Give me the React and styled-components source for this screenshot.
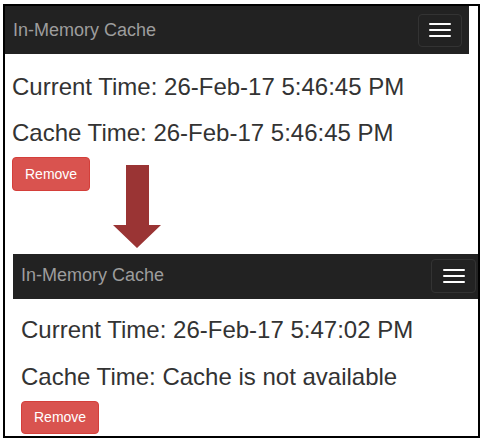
import React from "react";
import styled, { createGlobalStyle } from "styled-components";

const Global = createGlobalStyle`
  html, body { margin: 0; padding: 0; background: #fff; }
  body { font-family: "Liberation Sans", Arial, sans-serif; color: #333; }
`;

const Frame = styled.div`
  position: relative;
  box-sizing: border-box;
  margin: 4px 0 0 3px;
  width: 477px;
  height: 434px;
  border: 2px solid #000;
  overflow: hidden;
  background: #fff;
`;

const Shot = styled.section`
  width: ${(p) => p.$width}px;
  margin: ${(p) => p.$top}px 0 0 ${(p) => p.$left}px;
`;

const Navbar = styled.header`
  box-sizing: border-box;
  height: ${(p) => p.$height}px;
  background: #222;
  display: flex;
  align-items: center;
  justify-content: space-between;
  padding: ${(p) => (p.$compact ? "0 7px 3px 8px" : "0 7px 0 8px")};
`;

const Brand = styled.span`
  font-size: 18px;
  line-height: 20px;
  color: #9d9d9d;
`;

const Toggle = styled.button`
  box-sizing: border-box;
  width: ${(p) => (p.$compact ? 45 : 44)}px;
  height: ${(p) => (p.$compact ? 34 : 33)}px;
  margin-top: ${(p) => (p.$compact ? 3 : 0)}px;
  border: 1px solid #333;
  border-radius: 4px;
  background: transparent;
  display: flex;
  flex-direction: column;
  align-items: center;
  justify-content: center;
  gap: 4px;
  padding: 0;
`;

const Bar = styled.span`
  display: block;
  width: 22px;
  height: 2px;
  background: #fff;
  border-radius: 1px;
`;

const Body = styled.div`
  padding-left: ${(p) => p.$pad}px;
`;

const Heading = styled.h2`
  margin: ${(p) => p.$mt}px 0 0 0;
  font-size: 24px;
  line-height: 26.4px;
  font-weight: 400;
  color: #333;
  white-space: nowrap;
`;

const RemoveButton = styled.button`
  box-sizing: border-box;
  margin-top: 10px;
  height: ${(p) => (p.$compact ? 33 : 34)}px;
  padding: 0 12px;
  font-family: "Liberation Sans", Arial, sans-serif;
  font-size: 14px;
  line-height: 20px;
  color: #fff;
  background: #d9534f;
  border: 1px solid #d43f3a;
  border-radius: 4px;
  display: block;
`;

const Arrow = styled.svg`
  position: absolute;
  left: 108px;
  top: 159px;
`;

function Screen({ width, top, left, navHeight, compact, pad, current, cache, gaps }) {
  return (
    <Shot $width={width} $top={top} $left={left}>
      <Navbar $height={navHeight} $compact={compact}>
        <Brand>In-Memory Cache</Brand>
        <Toggle $compact={compact} aria-label="menu">
          <Bar />
          <Bar />
          <Bar />
        </Toggle>
      </Navbar>
      <Body $pad={pad}>
        <Heading $mt={gaps[0]}>Current Time: {current}</Heading>
        <Heading $mt={gaps[1]}>Cache Time: {cache}</Heading>
        <RemoveButton $compact={compact}>Remove</RemoveButton>
      </Body>
    </Shot>
  );
}

export default function App() {
  return (
    <>
      <Global />
      <Frame>
        <Screen
          width={464}
          top={0}
          left={0}
          navHeight={48}
          pad={7}
          current="26-Feb-17 5:46:45 PM"
          cache="26-Feb-17 5:46:45 PM"
          gaps={[20, 20]}
        />
        <Screen
          width={470}
          top={63}
          left={8}
          navHeight={45}
          compact
          pad={8}
          current="26-Feb-17 5:47:02 PM"
          cache="Cache is not available"
          gaps={[18, 21]}
        />
        <Arrow width="48" height="84" viewBox="0 0 48 84">
          <polygon points="13,0 36,0 36,60 48,60 24,83 0,60 13,60" fill="#9a3434" />
        </Arrow>
      </Frame>
    </>
  );
}
